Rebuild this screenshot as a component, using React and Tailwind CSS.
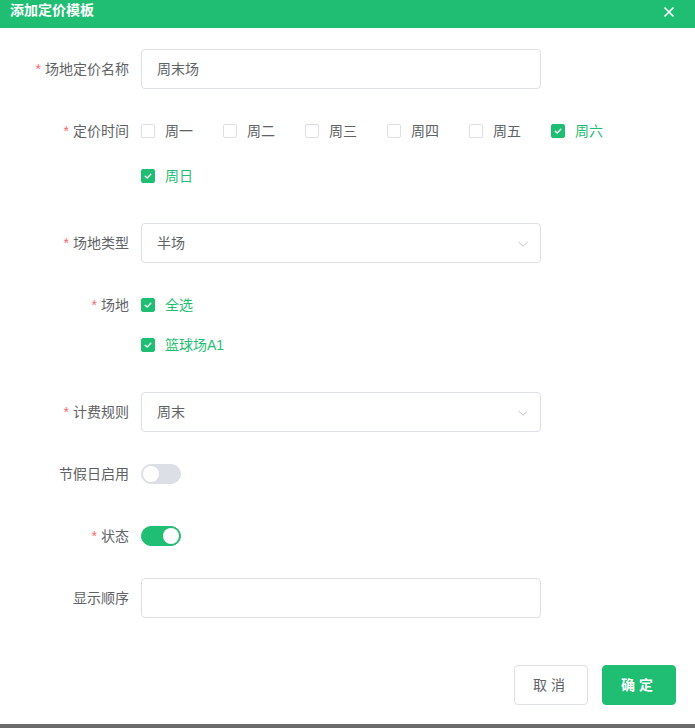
import React, { useState } from 'react';

const Label = ({ required, children }) => (
  <div className="w-[141px] shrink-0 pr-[12px] text-right text-[14px] leading-[40px] text-[#606266]">
    {required && <span className="mr-[4px] text-[#f56c6c]">*</span>}
    {children}
  </div>
);

const Checkbox = ({ checked, label, wide }) => (
  <label className={`flex h-[40px] items-center cursor-pointer ${wide ? 'mr-[30px]' : ''}`}>
    <span
      className={`flex h-[14px] w-[14px] items-center justify-center rounded-[2px] border ${
        checked ? 'border-[#1fbe73] bg-[#1fbe73]' : 'border-[#dcdfe6] bg-white'
      }`}
    >
      {checked && (
        <svg width="10" height="10" viewBox="0 0 10 10" fill="none">
          <path d="M2.2 5.2 L4.2 7 L7.8 3.2" stroke="white" strokeWidth="1.3" strokeLinecap="round" strokeLinejoin="round" />
        </svg>
      )}
    </span>
    <span className={`pl-[10px] text-[14px] ${checked ? 'text-[#1fbe73]' : 'text-[#606266]'}`}>{label}</span>
  </label>
);

const Input = ({ value, select }) => (
  <div className="relative flex h-[40px] w-[400px] items-center rounded-[4px] border border-[#dcdfe6] bg-white px-[15px] text-[14px] text-[#606266]">
    <span>{value}</span>
    {select && (
      <svg className="absolute right-[11px] top-[14px]" width="12" height="12" viewBox="0 0 12 12" fill="none">
        <path d="M1.5 4 L6 8.2 L10.5 4" stroke="#c0c4cc" strokeWidth="1" />
      </svg>
    )}
  </div>
);

const Switch = ({ on }) => (
  <div className="flex h-[40px] items-center">
    <span
      className={`relative flex h-[20px] w-[40px] items-center rounded-[10px] border ${
        on ? 'border-[#1fbe73] bg-[#1fbe73]' : 'border-[#dcdfe6] bg-[#dcdfe6]'
      }`}
    >
      <span className={`absolute top-[1px] h-[16px] w-[16px] rounded-full bg-white ${on ? 'left-[21px]' : 'left-[1px]'}`} />
    </span>
  </div>
);

export default function App() {
  const [days] = useState(['周一', '周二', '周三', '周四', '周五', '周六']);

  return (
    <div
      className="relative flex h-[728px] w-[695px] flex-col overflow-hidden bg-white"
      style={{ fontFamily: '"Helvetica Neue", Arial, "Noto Sans CJK SC", sans-serif' }}
    >
      {/* header */}
      <div className="flex h-[28px] shrink-0 items-center justify-between bg-[#1fbe73] pl-[10px] pr-[20px]">
        <span className="-mt-[8px] text-[14px] font-bold text-white">添加定价模板</span>
        <svg width="12" height="12" viewBox="0 0 12 12" className="-mt-[4px]">
          <path d="M1.5 1.5 L10.5 10.5 M10.5 1.5 L1.5 10.5" stroke="white" strokeWidth="1.6" />
        </svg>
      </div>

      {/* form */}
      <div className="flex flex-col pt-[21px]">
        <div className="mb-[22px] flex">
          <Label required>场地定价名称</Label>
          <Input value="周末场" />
        </div>

        <div className="mb-[22px] flex">
          <Label required>定价时间</Label>
          <div className="flex w-[520px] flex-col">
            <div className="mb-[5px] flex">
              {days.map((d) => (
                <Checkbox key={d} label={d} checked={d === '周六'} wide />
              ))}
            </div>
            <div className="mb-[5px] flex">
              <Checkbox label="周日" checked />
            </div>
          </div>
        </div>

        <div className="mb-[22px] flex">
          <Label required>场地类型</Label>
          <Input value="半场" select />
        </div>

        <div className="mb-[22px] flex">
          <Label required>场地</Label>
          <div className="flex flex-col pb-[5px]">
            <Checkbox label="全选" checked />
            <Checkbox label="篮球场A1" checked />
          </div>
        </div>

        <div className="mb-[22px] flex">
          <Label required>计费规则</Label>
          <Input value="周末" select />
        </div>

        <div className="mb-[22px] flex">
          <Label>节假日启用</Label>
          <Switch on={false} />
        </div>

        <div className="mb-[22px] flex">
          <Label required>状态</Label>
          <Switch on />
        </div>

        <div className="flex">
          <Label>显示顺序</Label>
          <Input value="" />
        </div>
      </div>

      {/* footer */}
      <div className="mt-[47px] flex justify-end gap-[14px] pr-[19px]">
        <button className="h-[40px] w-[74px] rounded-[4px] border border-[#dcdfe6] bg-white text-[14px] tracking-[4px] text-[#606266]">
          取消
        </button>
        <button className="h-[40px] w-[74px] rounded-[4px] border border-[#1fbe73] bg-[#1fbe73] text-[14px] font-bold tracking-[4px] text-white">
          确定
        </button>
      </div>

      <div className="absolute bottom-0 left-0 h-[4px] w-full bg-[#6b6b6b]" />
    </div>
  );
}
